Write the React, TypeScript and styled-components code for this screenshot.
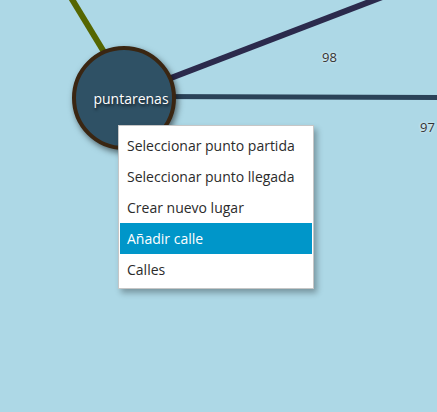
import styled, { createGlobalStyle } from "styled-components";

const GlobalStyle = createGlobalStyle`
  html, body {
    margin: 0;
    padding: 0;
    background: #add8e6;
    font-family: "Open Sans", "Noto Sans", sans-serif;
  }
`;

const Canvas = styled.div`
  position: relative;
  width: 437px;
  height: 412px;
  overflow: hidden;
  background: #add8e6;
`;

const Edges = styled.svg`
  position: absolute;
  inset: 0;
`;

const Node = styled.div`
  position: absolute;
  left: 72px;
  top: 46px;
  width: 104px;
  height: 104px;
  box-sizing: border-box;
  padding-left: 14px;
  border-radius: 50%;
  border: 4px solid #3a2612;
  background: #2f5165;
  box-shadow: 2px 3px 6px rgba(0, 0, 0, 0.55);
  display: flex;
  align-items: center;
  justify-content: center;
  color: #ffffff;
  font-size: 14px;
  text-shadow: 1px 2px 3px rgba(0, 0, 0, 0.7);
`;

const EdgeLabel = styled.span<{ $x: number; $y: number }>`
  position: absolute;
  left: ${(p) => p.$x}px;
  top: ${(p) => p.$y}px;
  font-size: 13px;
  color: #333;
  text-shadow: 0 0 3px #ffffff;
`;

const Menu = styled.ul`
  position: absolute;
  left: 118px;
  top: 125px;
  width: 196px;
  box-sizing: border-box;
  margin: 0;
  padding: 4px 1px 3px;
  list-style: none;
  background: #ffffff;
  border: 1px solid #c6c6c6;
  box-shadow: 3px 4px 6px rgba(0, 0, 0, 0.3);
`;

const MenuItem = styled.li<{ $active?: boolean }>`
  height: 31px;
  display: flex;
  align-items: center;
  padding-left: 7px;
  font-size: 14px;
  color: ${(p) => (p.$active ? "#ffffff" : "#2b2b2b")};
  background: ${(p) => (p.$active ? "#0096c9" : "transparent")};
  white-space: nowrap;
`;

const items = [
  "Seleccionar punto partida",
  "Seleccionar punto llegada",
  "Crear nuevo lugar",
  "Añadir calle",
  "Calles",
];

export default function App() {
  return (
    <>
      <GlobalStyle />
      <Canvas>
        <Edges width="437" height="412">
          <line x1="70" y1="-4" x2="104" y2="52" stroke="#556600" strokeWidth="6" />
          <line x1="150" y1="86" x2="390" y2="-6" stroke="#2b2a4c" strokeWidth="6" />
          <line x1="150" y1="96.5" x2="440" y2="97.5" stroke="#2a4258" strokeWidth="5" />
        </Edges>
        <EdgeLabel $x={322} $y={48}>98</EdgeLabel>
        <EdgeLabel $x={420} $y={118}>97</EdgeLabel>
        <Node>puntarenas</Node>
        <Menu>
          {items.map((label) => (
            <MenuItem key={label} $active={label === "Añadir calle"}>
              {label}
            </MenuItem>
          ))}
        </Menu>
      </Canvas>
    </>
  );
}
